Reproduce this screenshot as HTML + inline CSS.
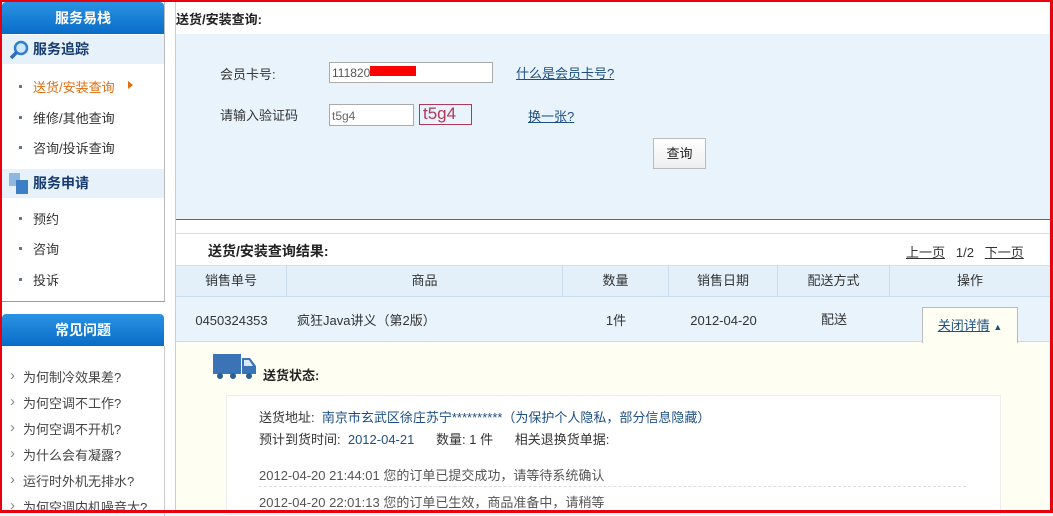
<!DOCTYPE html>
<html><head><meta charset="utf-8"><style>
*{margin:0;padding:0;box-sizing:border-box}
body{width:1053px;height:513px;overflow:hidden;background:#fff;font-family:"Liberation Sans","Noto Sans CJK SC",sans-serif;font-size:13px;color:#333;position:relative}
.a{position:absolute}
.red{background:#e8000f}
.bh{background:linear-gradient(#2a93e3,#0a6cc8);color:#fff;font-weight:bold;text-align:center;font-size:14px;border-radius:4px 4px 0 0}
.sec{background:#e6f1fa;font-weight:bold;color:#173b70;font-size:14px}
.it{font-size:13px;color:#333}
.it:before{content:"";position:absolute;left:-14px;top:8px;width:3px;height:3px;background:#678}
.q{font-size:13px;color:#444}
.q:before{content:"›";position:absolute;left:-13px;top:0px;color:#888;font-size:15px}
a,.lnk{color:#1d4f86;text-decoration:underline}
.th{position:absolute;top:265px;height:31px;line-height:31px;text-align:center;border-right:1px solid #c9dced;color:#333}
.td{position:absolute;top:296px;height:45px;line-height:50px;text-align:center;color:#333}
</style></head><body>
<!-- sidebar -->
<div class="a bh" style="left:2px;top:2px;width:162px;height:32px;line-height:32px">服务易栈</div>
<div class="a" style="left:164px;top:2px;width:1px;height:300px;background:#bbb"></div>
<div class="a sec" style="left:2px;top:35px;width:162px;height:29px;line-height:29px;padding-left:31px">服务追踪</div>
<svg class="a" style="left:8px;top:39px" width="22" height="22"><circle cx="13" cy="9" r="6" fill="#cfe6fb" stroke="#2f7fcf" stroke-width="2.5"/><line x1="9" y1="13" x2="3" y2="19" stroke="#2f6fb5" stroke-width="3.5"/></svg>
<div class="a it" style="left:33px;top:77px;color:#e06d0f">送货/安装查询</div>
<div class="a" style="left:128px;top:81px;width:0;height:0;border-left:5px solid #e06d0f;border-top:4px solid transparent;border-bottom:4px solid transparent"></div>
<div class="a it" style="left:33px;top:108px">维修/其他查询</div>
<div class="a it" style="left:33px;top:138px">咨询/投诉查询</div>
<div class="a sec" style="left:2px;top:169px;width:162px;height:29px;line-height:29px;padding-left:31px">服务申请</div>
<svg class="a" style="left:8px;top:172px" width="22" height="24"><rect x="1" y="1" width="11" height="13" fill="#8fb8e0"/><rect x="8" y="8" width="12" height="14" fill="#3d7fc4"/></svg>
<div class="a it" style="left:33px;top:209px">预约</div>
<div class="a it" style="left:33px;top:239px">咨询</div>
<div class="a it" style="left:33px;top:270px">投诉</div>
<div class="a" style="left:2px;top:301px;width:163px;height:1px;background:#999"></div>
<div class="a bh" style="left:2px;top:314px;width:162px;height:32px;line-height:32px">常见问题</div>
<div class="a" style="left:164px;top:346px;width:1px;height:170px;background:#ccc"></div>
<div class="a q" style="left:23px;top:367px">为何制冷效果差?</div>
<div class="a q" style="left:23px;top:393px">为何空调不工作?</div>
<div class="a q" style="left:23px;top:419px">为何空调不开机?</div>
<div class="a q" style="left:23px;top:445px">为什么会有凝露?</div>
<div class="a q" style="left:23px;top:471px">运行时外机无排水?</div>
<div class="a q" style="left:23px;top:497px">为何空调内机噪音大?</div>
<!-- main -->
<div class="a" style="left:175px;top:2px;width:1px;height:511px;background:#ccc"></div>
<div class="a" style="left:176px;top:9px;font-weight:bold;color:#222">送货/安装查询:</div>
<div class="a" style="left:176px;top:34px;width:874px;height:186px;background:#e8f3fc;border-bottom:1px solid #666"></div>
<div class="a" style="left:220px;top:64px">会员卡号:</div>
<div class="a" style="left:329px;top:62px;width:164px;height:21px;border:1px solid #aaa;background:#fff;font-size:12px;padding:3px 2px;color:#555">111820</div>
<div class="a" style="left:370px;top:66px;width:46px;height:10px;background:#f00"></div>
<div class="a lnk" style="left:516px;top:63px">什么是会员卡号?</div>
<div class="a" style="left:220px;top:105px">请输入验证码</div>
<div class="a" style="left:329px;top:104px;width:85px;height:22px;border:1px solid #aaa;background:#fff;font-size:12px;padding:4px 2px;color:#666">t5g4</div>
<div class="a" style="left:419px;top:104px;width:53px;height:21px;border:1px solid #b0395a;color:#b0395a;font-size:17px;line-height:18px;padding-left:3px">t5g4</div>
<div class="a lnk" style="left:528px;top:106px">换一张?</div>
<div class="a" style="left:653px;top:138px;width:53px;height:31px;border:1px solid #bbb;background:linear-gradient(#fff,#eee);text-align:center;line-height:30px;color:#222">查询</div>
<div class="a" style="left:176px;top:233px;width:874px;height:1px;background:#ddd"></div>
<div class="a" style="left:208px;top:241px;font-weight:bold;font-size:14px;color:#222">送货/安装查询结果:</div>
<div class="a" style="left:906px;top:242px"><span class="lnk" style="color:#333">上一页</span>&nbsp;&nbsp; 1/2 &nbsp;&nbsp;<span class="lnk" style="color:#333">下一页</span></div>
<div class="a" style="left:176px;top:265px;width:874px;height:31px;background:#e3f0fa;border-top:1px solid #cfe0ef"></div>
<div class="th" style="left:176px;width:111px">销售单号</div>
<div class="th" style="left:287px;width:276px">商品</div>
<div class="th" style="left:563px;width:106px">数量</div>
<div class="th" style="left:669px;width:109px">销售日期</div>
<div class="th" style="left:778px;width:112px">配送方式</div>
<div class="th" style="left:890px;width:160px;border:none">操作</div>
<div class="a" style="left:176px;top:296px;width:874px;height:46px;background:#e8f3fc;border-top:1px solid #c9dced;border-bottom:1px solid #c9dced"></div>
<div class="td" style="left:176px;width:111px">0450324353</div>
<div class="td" style="left:297px;text-align:left">疯狂Java讲义（第2版）</div>
<div class="td" style="left:563px;width:106px">1件</div>
<div class="td" style="left:669px;width:109px">2012-04-20</div>
<div class="td" style="left:778px;width:112px;line-height:48px">配送</div>
<div class="a" style="left:176px;top:342px;width:874px;height:171px;background:#fffef2"></div>
<div class="a" style="left:922px;top:307px;width:96px;height:36px;background:#fffef2;border:1px solid #bbb;border-bottom:none;text-align:center;line-height:36px"><span class="lnk">关闭详情</span> <span style="font-size:9px;color:#1d4f86">▲</span></div>
<svg class="a" style="left:211px;top:352px" width="46" height="28"><path d="M2 2h28v20H2z" fill="#3a74b7"/><path d="M31 6h8l6 8v8H31z" fill="#3a74b7"/><path d="M33 8h5l4 6h-9z" fill="#dce9f7"/><circle cx="9" cy="24" r="3" fill="#2b5d96"/><circle cx="22" cy="24" r="3" fill="#2b5d96"/><circle cx="38" cy="24" r="3" fill="#2b5d96"/></svg>
<div class="a" style="left:263px;top:365px;font-weight:bold;color:#222">送货状态:</div>
<div class="a" style="left:226px;top:395px;width:775px;height:120px;background:#fff;border:1px solid #eee"></div>
<div class="a" style="left:259px;top:407px">送货地址: <span style="color:#1d4f86">&nbsp;南京市玄武区徐庄苏宁**********（为保护个人隐私，部分信息隐藏）</span></div>
<div class="a" style="left:259px;top:429px">预计到货时间: <span style="color:#1d4f86">&nbsp;2012-04-21</span>&nbsp;&nbsp;&nbsp;&nbsp;&nbsp; 数量: 1 件 &nbsp;&nbsp;&nbsp;&nbsp;&nbsp;相关退换货单据:</div>
<div class="a" style="left:259px;top:465px;color:#555">2012-04-20 21:44:01 您的订单已提交成功，请等待系统确认</div>
<div class="a" style="left:259px;top:486px;width:707px;border-top:1px dashed #ddd"></div>
<div class="a" style="left:259px;top:492px;color:#555">2012-04-20 22:01:13 您的订单已生效，商品准备中，请稍等</div>
<!-- red frame -->
<div class="a red" style="left:0;top:0;width:1053px;height:2px"></div>
<div class="a red" style="left:0;top:0;width:2px;height:513px"></div>
<div class="a red" style="left:1050px;top:0;width:3px;height:513px"></div>
<div class="a red" style="left:0;top:510px;width:1053px;height:3px"></div>
</body></html>
